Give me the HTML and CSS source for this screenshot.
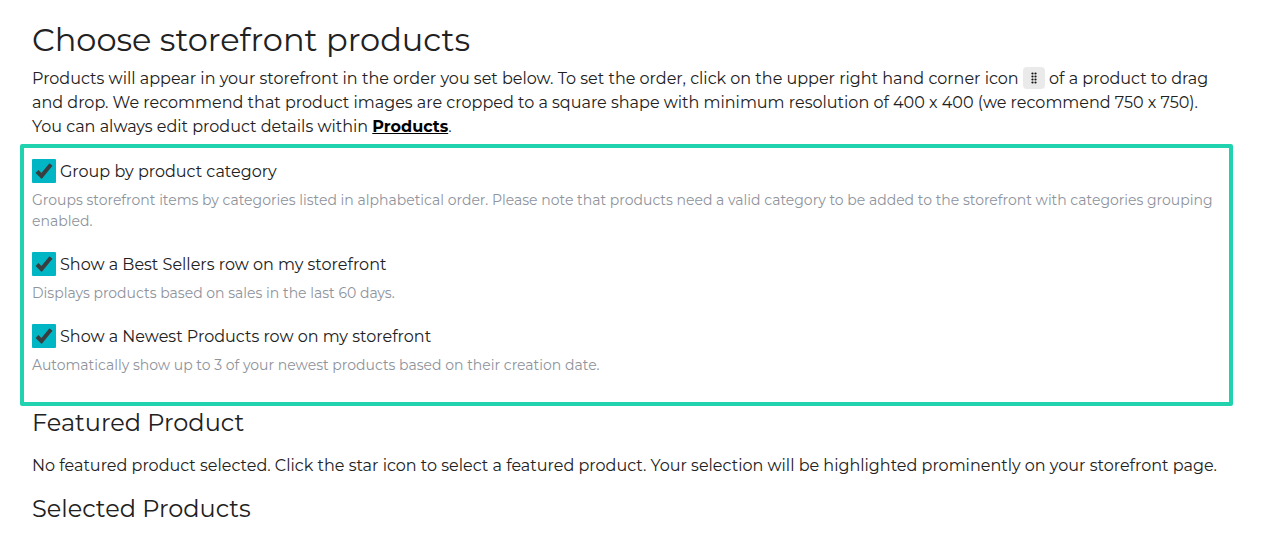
FILE: index.html
```html
<!DOCTYPE html>
<html lang="en">
<head>
  <meta charset="UTF-8" />
  <meta name="viewport" content="width=device-width, initial-scale=1" />
  <title>Storefront products</title>
  <link rel="stylesheet" href="styles.css">
</head>
<body>

  <main class="page">
    <h1>Choose storefront products</h1>
    <p class="intro">
      Products will appear in your storefront in the order you set below. To set the order, click on the upper right hand corner icon
      <span class="drag-icon">
        <svg width="6" height="12" viewBox="0 0 6 12" fill="#111" role="img" aria-label="drag handle">
          <circle cx="1.5" cy="1.5" r="1.1" />
          <circle cx="4.5" cy="1.5" r="1.1" />
          <circle cx="1.5" cy="4.5" r="1.1" />
          <circle cx="4.5" cy="4.5" r="1.1" />
          <circle cx="1.5" cy="7.5" r="1.1" />
          <circle cx="4.5" cy="7.5" r="1.1" />
          <circle cx="1.5" cy="10.5" r="1.1" />
          <circle cx="4.5" cy="10.5" r="1.1" />
        </svg>
      </span>
      of a product to drag and drop. We recommend that product images are cropped to a square shape with minimum resolution of 400 x 400 (we recommend 750 x 750). You can always edit product details within <a href="#products">Products</a>.
    </p>

    <section class="options" aria-label="Storefront options">
      <div class="option">
        <label class="option-label" for="group-category">
          <input type="checkbox" id="group-category" aria-describedby="group-help" checked />
          <span>Group by product category</span>
        </label>
        <p class="help" id="group-help">Groups storefront items by categories listed in alphabetical order. Please note that products need a valid category to be added to the storefront with categories grouping enabled.</p>
      </div>
      <div class="option">
        <label class="option-label" for="best-sellers">
          <input type="checkbox" id="best-sellers" aria-describedby="best-help" checked />
          <span>Show a Best Sellers row on my storefront</span>
        </label>
        <p class="help" id="best-help">Displays products based on sales in the last 60 days.</p>
      </div>
      <div class="option">
        <label class="option-label" for="newest-products">
          <input type="checkbox" id="newest-products" aria-describedby="newest-help" checked />
          <span>Show a Newest Products row on my storefront</span>
        </label>
        <p class="help" id="newest-help">Automatically show up to 3 of your newest products based on their creation date.</p>
      </div>
    </section>

    <h2>Featured Product</h2>
    <p class="featured">No featured product selected. Click the star icon to select a featured product. Your selection will be highlighted prominently on your storefront page.</p>
    <h2>Selected Products</h2>
  </main>

</body>
</html>
```

FILE: styles.css
```css
* {
  box-sizing: border-box;
}

body {
  margin: 0;
  font-family: Montserrat, Inter, sans-serif;
  font-size: 16px;
  line-height: 24px;
  color: #212121;
  background: #fff;
}

.page {
  padding: 20px 48px 12px 32px;
}

h1,
h2 {
  margin: 0;
  font-weight: 400;
}

h1 {
  font-size: 32px;
  line-height: 40px;
  margin-bottom: 7px;
}

h2 {
  font-size: 24px;
  line-height: 28px;
}

p {
  margin: 0;
}

.intro a {
  color: #000;
  font-weight: 700;
}

.drag-icon {
  display: inline-flex;
  align-items: center;
  justify-content: center;
  width: 22px;
  height: 22px;
  margin: -6px 0 -2px;
  border-radius: 4px;
  background: #eaeaea;
  vertical-align: middle;
}

.options {
  margin: 5px -8px 3px -12px;
  padding: 11px 8px 6px;
  border: 4px solid #20d3ae;
  border-radius: 2px;
}

.option {
  margin-bottom: 20px;
}

.option-label {
  display: flex;
  align-items: flex-start;
  gap: 4px;
  width: fit-content;
  line-height: 26px;
  cursor: pointer;
}

.option-label input {
  appearance: none;
  width: 24px;
  height: 24px;
  margin: 0;
  border-radius: 1px;
  background: #00b5c4;
  cursor: pointer;
}

.option-label input:checked {
  background-image: url("data:image/svg+xml,%3Csvg xmlns='http://www.w3.org/2000/svg' viewBox='0 0 24 24'%3E%3Cpath d='M5 12.5l4.5 4.5L19 5.5' fill='none' stroke='%23383d40' stroke-width='4'/%3E%3C/svg%3E");
}

.help {
  margin-top: 5px;
  font-size: 14px;
  line-height: 21px;
  color: #8e939c;
}

.featured {
  margin: 17px 0;
}
```
